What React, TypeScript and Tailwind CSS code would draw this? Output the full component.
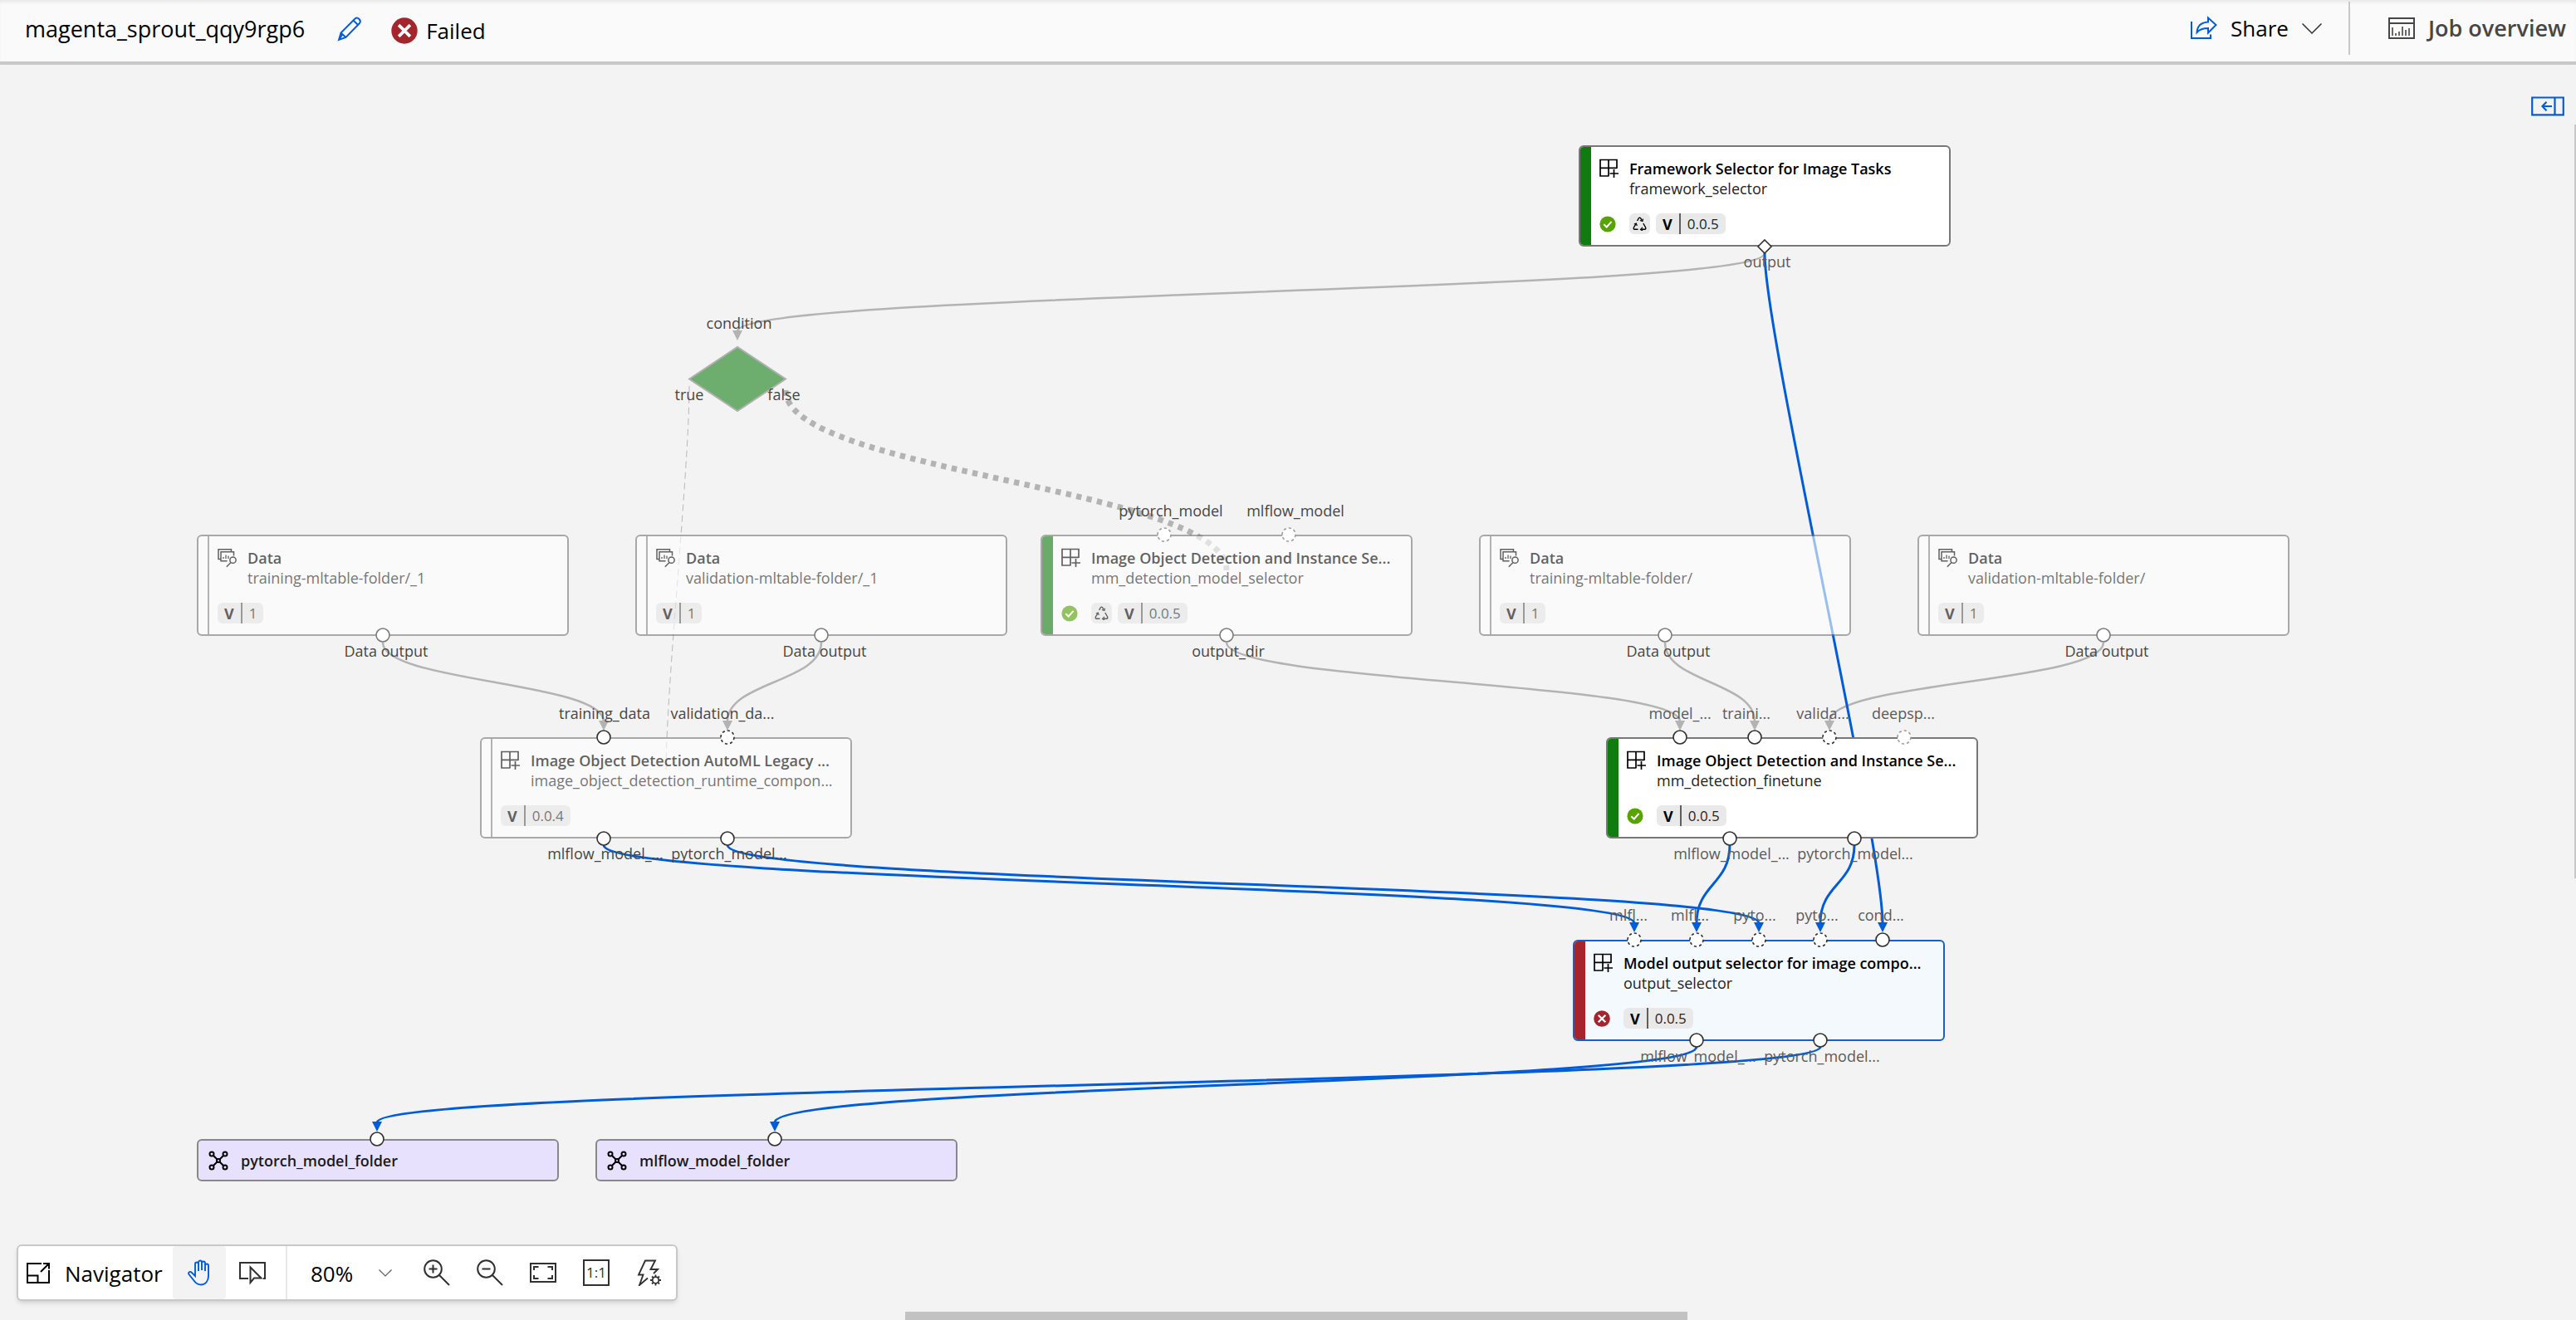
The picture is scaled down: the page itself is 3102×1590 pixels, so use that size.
import type { ReactNode } from "react";

type Status = "ok" | "failed" | "none";
type Kind = "component" | "data";

interface CardData {
  x: number;
  y: number;
  kind: Kind;
  title: string;
  name: string;
  version: string;
  status: Status;
  reused?: boolean;
  dim?: boolean;
  selected?: boolean;
}

const ROW_1 = 97;
const ROW_2 = 566;
const ROW_3 = 810;
const ROW_4 = 1054;
const ROW_5 = 1294;

const cards: CardData[] = [
  { x: 1901, y: ROW_1, kind: "component", title: "Framework Selector for Image Tasks", name: "framework_selector", version: "0.0.5", status: "ok", reused: true },
  { x: 237, y: ROW_2, kind: "data", title: "Data", name: "training-mltable-folder/_1", version: "1", status: "none", dim: true },
  { x: 765, y: ROW_2, kind: "data", title: "Data", name: "validation-mltable-folder/_1", version: "1", status: "none", dim: true },
  { x: 1253, y: ROW_2, kind: "component", title: "Image Object Detection and Instance Se...", name: "mm_detection_model_selector", version: "0.0.5", status: "ok", reused: true, dim: true },
  { x: 1781, y: ROW_2, kind: "data", title: "Data", name: "training-mltable-folder/", version: "1", status: "none", dim: true },
  { x: 2309, y: ROW_2, kind: "data", title: "Data", name: "validation-mltable-folder/", version: "1", status: "none", dim: true },
  { x: 578, y: ROW_3, kind: "component", title: "Image Object Detection AutoML Legacy ...", name: "image_object_detection_runtime_compon...", version: "0.0.4", status: "none", dim: true },
  { x: 1934, y: ROW_3, kind: "component", title: "Image Object Detection and Instance Se...", name: "mm_detection_finetune", version: "0.0.5", status: "ok" },
  { x: 1894, y: ROW_4, kind: "component", title: "Model output selector for image compo...", name: "output_selector", version: "0.0.5", status: "failed", selected: true },
];

const outputs = [
  { x: 237, label: "pytorch_model_folder" },
  { x: 717, label: "mlflow_model_folder" },
];

interface Edge {
  from: [number, number];
  to: [number, number];
  active?: boolean;
}

const edges: Edge[] = [
  { from: [2125, 227], to: [888, 332] },
  { from: [461, 696], to: [727, 802] },
  { from: [989, 696], to: [876, 802] },
  { from: [1477, 696], to: [2023, 802] },
  { from: [2005, 696], to: [2113, 802] },
  { from: [2533, 696], to: [2203, 802] },
  { from: [2125, 227], to: [2267, 1045], active: true },
  { from: [727, 940], to: [1968, 1045], active: true },
  { from: [876, 940], to: [2118, 1045], active: true },
  { from: [2083, 940], to: [2043, 1045], active: true },
  { from: [2233, 940], to: [2192, 1045], active: true },
  { from: [2043, 1183], to: [933, 1285], active: true },
  { from: [2192, 1183], to: [454, 1285], active: true },
];

interface Port {
  x: number;
  y: number;
  optional?: boolean;
  faded?: boolean;
}

const ports: Port[] = [
  { x: 461, y: 687, faded: true },
  { x: 989, y: 687, faded: true },
  { x: 1477, y: 687, faded: true },
  { x: 2005, y: 687, faded: true },
  { x: 2533, y: 687, faded: true },
  { x: 1402, y: 566, optional: true, faded: true },
  { x: 1552, y: 566, optional: true, faded: true },
  { x: 727, y: 810 },
  { x: 876, y: 810, optional: true },
  { x: 727, y: 932 },
  { x: 876, y: 932 },
  { x: 2023, y: 810 },
  { x: 2113, y: 810 },
  { x: 2203, y: 810, optional: true },
  { x: 2293, y: 810, optional: true, faded: true },
  { x: 2083, y: 932 },
  { x: 2233, y: 932 },
  { x: 1968, y: 1054, optional: true },
  { x: 2043, y: 1054, optional: true },
  { x: 2118, y: 1054, optional: true },
  { x: 2192, y: 1054, optional: true },
  { x: 2267, y: 1054 },
  { x: 2043, y: 1175 },
  { x: 2192, y: 1175 },
  { x: 454, y: 1294 },
  { x: 933, y: 1294 },
];

/* x is the middle of the text, y the top of its 24px line */
const labels: { x: number; y: number; text: string; light?: boolean }[] = [
  { x: 2128, y: 225, text: "output", light: true },
  { x: 890, y: 299, text: "condition" },
  { x: 830, y: 385, text: "true" },
  { x: 944, y: 385, text: "false" },
  { x: 1410, y: 525, text: "pytorch_model" },
  { x: 1560, y: 525, text: "mlflow_model" },
  { x: 465, y: 694, text: "Data output" },
  { x: 993, y: 694, text: "Data output" },
  { x: 1479, y: 694, text: "output_dir" },
  { x: 2009, y: 694, text: "Data output" },
  { x: 2537, y: 694, text: "Data output" },
  { x: 728, y: 769, text: "training_data" },
  { x: 870, y: 769, text: "validation_da..." },
  { x: 2023, y: 769, text: "model_...", light: true },
  { x: 2103, y: 769, text: "traini...", light: true },
  { x: 2195, y: 769, text: "valida...", light: true },
  { x: 2292, y: 769, text: "deepsp...", light: true },
  { x: 729, y: 938, text: "mlflow_model_..." },
  { x: 878, y: 938, text: "pytorch_model..." },
  { x: 2085, y: 938, text: "mlflow_model_...", light: true },
  { x: 2234, y: 938, text: "pytorch_model...", light: true },
  { x: 1961, y: 1012, text: "mlfl...", light: true },
  { x: 2035, y: 1012, text: "mlfl...", light: true },
  { x: 2113, y: 1012, text: "pyto...", light: true },
  { x: 2188, y: 1012, text: "pyto...", light: true },
  { x: 2265, y: 1012, text: "cond...", light: true },
  { x: 2045, y: 1182, text: "mlflow_model_...", light: true },
  { x: 2194, y: 1182, text: "pytorch_model...", light: true },
];

function curve([x1, y1]: [number, number], [x2, y2]: [number, number]) {
  const bend = Math.min((y2 - y1) / 2, 100);
  return `M${x1} ${y1}C${x1} ${y1 + bend} ${x2} ${y2 - bend} ${x2} ${y2}`;
}

function Icon({ className, box, children }: { className: string; box: string; children: ReactNode }) {
  return (
    <svg className={className} viewBox={box} fill="none" stroke="currentColor" strokeWidth="2" aria-hidden="true">
      {children}
    </svg>
  );
}

const ComponentIcon = () => (
  <Icon className="h-6 w-6 shrink-0" box="0 0 24 24">
    <path d="M11.5 21H1V1.500H21V12M1 11.300H21M11 1.500V21M17.500 13V23M12.500 18H23" strokeWidth="1.7" />
  </Icon>
);

const DataIcon = () => (
  <Icon className="h-6 w-6 shrink-0" box="0 0 24 24">
    <path d="M3.500 13.500H1V1.700H16.500V4M11.500 15.700H4V4.800H19.500V9.500" strokeWidth="1.500" />
    <path d="M7 13V11M10 13V8.500M13 13V9.500" strokeWidth="1.300" />
    <circle cx="18.500" cy="14.700" r="3.600" strokeWidth="1.500" />
    <path d="M16 17.500L10.800 22.800" strokeWidth="1.500" />
  </Icon>
);

const OkIcon = () => (
  <svg className="h-5 w-5" viewBox="0 0 20 20" role="img" aria-label="Completed">
    <circle cx="10" cy="10" r="9.600" fill="#57a300" />
    <path d="M5.300 10.300L8.700 13.500L14.600 6.800" fill="none" stroke="#fff" strokeWidth="2" />
  </svg>
);

const FailIcon = ({ className }: { className: string }) => (
  <svg className={className} viewBox="0 0 20 20" aria-hidden="true">
    <circle cx="10" cy="10" r="9.800" fill="#a4262c" />
    <path d="M5.700 5.700L14.300 14.300M14.300 5.700L5.700 14.300" fill="none" stroke="#fff" strokeWidth="2.300" />
  </svg>
);

const RecycleIcon = () => (
  <Icon className="h-[17px] w-[17px]" box="0 0 17 17">
    <path d="M5.500 5L7.300 1.900Q8.500 .4 9.700 1.900L11.300 4.700M12.800 8L15.600 13Q16.300 15 14.500 15.300H10.500M6.500 15.300H2.500Q.7 15 1.400 13L3.800 8.800" strokeWidth="1.400" />
    <path d="M8.800 4.500L11.900 5.500L12.500 2.600M12 12.900L9.500 15.300L12 17M1.800 9L4.300 8L5.300 11" strokeWidth="1.200" />
  </Icon>
);

function NodeCard({ card }: { card: CardData }) {
  const border = card.selected ? "border-[#1560c8]" : "border-[#797775]";
  const surface = card.selected ? "bg-[#f3f9fd]" : "bg-white";
  const dim = card.dim ? "opacity-60" : "";
  const bar =
    card.status === "ok" ? "bg-[#107c10]" : card.status === "failed" ? "bg-[#a4262c]" : "border-r-2 border-[#8a8886]";
  return (
    <article
      className={`absolute flex h-[122px] w-[448px] overflow-hidden rounded-md border-2 ${border} ${surface} ${dim}`}
      style={{ left: card.x, top: card.y }}
    >
      <div className={`w-[13px] shrink-0 ${bar}`} />
      <div className="flex min-w-0 flex-1 flex-col pt-3.5 pl-2.5">
        <div className="flex gap-3">
          {card.kind === "component" ? <ComponentIcon /> : <DataIcon />}
          <div className="whitespace-nowrap leading-6">
            <h2 className="text-[18px] leading-6 font-semibold text-black">{card.title}</h2>
            <p className="text-[18px] leading-6 text-[#252423]">{card.name}</p>
          </div>
        </div>
        <div className="mt-[18px] flex h-[25px] items-center">
          {card.status !== "none" && (
            <span className="w-9">{card.status === "ok" ? <OkIcon /> : <FailIcon className="h-5 w-5" />}</span>
          )}
          {card.reused && (
            <span className="mr-[7px] flex h-full w-[25px] items-center justify-center rounded-md bg-[#e9e9e9]">
              <RecycleIcon />
            </span>
          )}
          <span className="flex h-full items-center rounded-md bg-[#e9e9e9] leading-6">
            <b className="px-2 text-[18px] font-bold">V</b>
            <span className="h-full w-0.5 bg-[#605e5c]" />
            <span className="px-2 text-[17px] text-[#252423]">{card.version}</span>
          </span>
        </div>
      </div>
    </article>
  );
}

function ToolButton({ label, active, children }: { label: string; active?: boolean; children: ReactNode }) {
  return (
    <button
      aria-label={label}
      className={`flex w-16 items-center justify-center ${active ? "rounded-sm bg-[#f3f3f3] text-[#015cda]" : "text-[#323130]"}`}
    >
      {children}
    </button>
  );
}

function Toolbar() {
  return (
    <div className="absolute bottom-[23px] left-5 flex h-[68px] items-stretch rounded-md border-2 border-[#c8c8c8] bg-white text-[26px] text-black shadow-md">
      <button className="flex w-[186px] items-center gap-[18px] pt-0.5 pl-2.5">
        <Icon className="mb-0.5 h-7 w-7 shrink-0" box="0 0 28 28">
          <path d="M18 3H1V26H27V11M1 17.500H13.500V26M20 3H27V9.500M26.500 3.500L17 13" />
        </Icon>
        Navigator
      </button>
      <ToolButton label="Pan" active>
        <Icon className="h-8 w-8" box="0 0 32 32">
          <path
            d="M11 14V5.500a2 2 0 0 1 4 0V14M15 13V3.500a2 2 0 0 1 4 0V13M19 13V4.500a2 2 0 0 1 4 0V14M23 14V7.500a2 2 0 0 1 4 0V20c0 6-3.500 10.500-9 10.500-4 0-6.500-2-8.500-5L3.500 18c-1.300-2.200 1.200-4 3-2.500L11 20V14"
            strokeWidth="1.900"
          />
        </Icon>
      </ToolButton>
      <ToolButton label="Select">
        <Icon className="h-8 w-8" box="0 0 32 32">
          <path d="M11 23H1V4H31V23H29" />
          <path d="M13.500 9.500V28L18 22.500H26.500Z" />
        </Icon>
      </ToolButton>
      <div className="ml-2 w-0.5 bg-[#e8e8e8]" />
      <label className="flex w-[148px] items-center pl-7">
        <select aria-label="Zoom level" className="w-[82px] appearance-none bg-transparent pt-0.5" defaultValue="80%">
          <option>80%</option>
          <option>100%</option>
        </select>
        <Icon className="h-4 w-4 text-[#605e5c]" box="0 0 16 16">
          <path d="M.5 4.500L8 12L15.500 4.500" strokeWidth="1.200" />
        </Icon>
      </label>
      <ToolButton label="Zoom in">
        <Icon className="h-8 w-8" box="0 0 32 32">
          <circle cx="11.500" cy="11.500" r="10.300" />
          <path d="M19 19L31 31M11.500 6.500V16.500M6.500 11.500H16.500" />
        </Icon>
      </ToolButton>
      <ToolButton label="Zoom out">
        <Icon className="h-8 w-8" box="0 0 32 32">
          <circle cx="11.500" cy="11.500" r="10.300" />
          <path d="M19 19L31 31M6.500 11.500H16.500" />
        </Icon>
      </ToolButton>
      <ToolButton label="Fit to screen">
        <Icon className="h-8 w-8" box="0 0 32 32">
          <path d="M1 5H31V27H1ZM5 13V9H10.500M21.500 9H27V13M27 19V23H21.500M10.500 23H5V19" />
        </Icon>
      </ToolButton>
      <ToolButton label="Actual size">
        <span className="flex h-8 w-8 items-center justify-center border-2 border-[#323130] text-[17px] leading-7">1:1</span>
      </ToolButton>
      <ToolButton label="Auto layout">
        <Icon className="h-8 w-8" box="0 0 32 32">
          <path d="M14 22.500L4 31L8.500 18.500H3L11 1.500H23L17.500 12H26L21 17" strokeWidth="1.900" />
          <circle cx="23.500" cy="25" r="3.800" strokeWidth="1.800" />
          <path d="M23.500 18.500V21M23.500 29V31.500M17 25H19.500M27.500 25H30M19 20.500L20.700 22.200M26.300 27.800L28 29.500M28 20.500L26.300 22.200M20.700 27.800L19 29.500" strokeWidth="1.800" />
        </Icon>
      </ToolButton>
    </div>
  );
}

export default function App() {
  return (
    <div className="flex h-screen flex-col overflow-hidden bg-[#f3f3f3] font-['Open_Sans','Noto_Sans',sans-serif] text-black">
      <header className="flex h-[78px] shrink-0 items-start border-b-4 border-[#c8c8c8] bg-[#fafafa] pl-[30px] text-[26px] leading-9 shadow-[inset_0_4px_4px_-2px_#e4e4e4]">
        <div className="flex h-[70px] items-center">
          <h1 className="text-[27px] font-medium">magenta_sprout_qqy9rgp6</h1>
          <button aria-label="Rename job" className="ml-[38px] text-[#015cda]">
            <Icon className="h-8 w-8" box="0 0 32 32">
              <path d="M3 29L5.500 20.500L22.500 3.500Q25 1.500 27.500 4Q30 6.500 28 9L11.500 26L3 29ZM20.500 5.500L26.500 11.500M5.500 20.500L11.500 26M3 29L7 23" strokeWidth="1.900" />
            </Icon>
          </button>
          <div className="mt-1 ml-[34px] flex items-center gap-2.5">
            <FailIcon className="h-8 w-8" />
            <span>Failed</span>
          </div>
        </div>
        <div className="ml-auto flex h-[66px] items-center pt-0.5">
          <button className="flex items-center gap-4">
            <Icon className="h-8 w-8 text-[#015cda]" box="0 0 32 32">
              <path d="M1 8V28H24V23.500" />
              <path d="M21 3.500L30.500 12L21 21.500V16C15 16 11 17 7.500 21C8 12.500 13 9 21 8.500Z" />
            </Icon>
            Share
            <Icon className="h-6 w-6 text-[#323130]" box="0 0 24 24">
              <path d="M.5 6.500L12 18L23.500 6.500" strokeWidth="1.500" />
            </Icon>
          </button>
          <div className="mr-[46px] ml-8 h-16 w-0.5 self-end bg-[#c8c8c8]" />
          <button className="flex items-center gap-4 pr-3 text-[27px] font-semibold text-[#484644]">
            <Icon className="h-8 w-8" box="0 0 32 32">
              <path d="M1 4H31V28H1ZM1 10H31" />
              <path d="M5 15V25M9 22V25M13 20V25M17 14V25M21 18V25M25 16V25" strokeWidth="1.600" />
            </Icon>
            Job overview
          </button>
        </div>
      </header>

      <main className="relative min-h-0 flex-1 overflow-hidden">
        <svg className="absolute inset-0 h-full w-full" fill="none" aria-hidden="true">
          <path d={curve([830, 387], [802, 852])} stroke="#b8b8b8" strokeWidth="1" strokeDasharray="8 5" />
          <path d={curve([946, 392], [1477, 609])} stroke="#b3b3b3" strokeWidth="7" strokeDasharray="6.400 6.400" />
          <path d="M830 378.500L888 340L946 378.500L888 417Z" fill="#6dae6e" stroke="#b0b0b0" strokeWidth="2" />
          {edges.map((e, i) => {
            const color = e.active ? "#015cda" : "#b3b3b3";
            const [x, y] = e.to;
            return (
              <g key={i}>
                <path d={curve(e.from, [x, y - 11])} stroke={color} strokeWidth={e.active ? 3 : 2.5} />
                <path d={`M${x - 6} ${y - 12}H${x + 6}L${x} ${y}Z`} fill={color} />
              </g>
            );
          })}
        </svg>

        {cards.map((card) => (
          <NodeCard key={`${card.x}-${card.y}`} card={card} />
        ))}

        {outputs.map((o) => (
          <article
            key={o.label}
            className="absolute flex h-[51px] w-[436px] items-center gap-[15px] rounded-md border-2 border-[#8a8886] bg-[#e8e1fd] pt-px pl-3"
            style={{ left: o.x, top: ROW_5 }}
          >
            <Icon className="h-6 w-6" box="0 0 24 24">
              <circle cx="4" cy="4" r="2.500" />
              <circle cx="20" cy="4" r="2.500" />
              <circle cx="4" cy="20" r="2.500" />
              <circle cx="20" cy="20" r="2.500" />
              <circle cx="12" cy="12" r="2" />
              <path d="M6 6L10.500 10.500M18 6L13.500 10.500M6 18L10.500 13.500M18 18L13.500 13.500" />
            </Icon>
            <h2 className="text-[18px] leading-6 font-semibold text-[#1b1a19]">{o.label}</h2>
          </article>
        ))}

        <svg className="absolute inset-0 h-full w-full" fill="#fff" aria-hidden="true">
          {ports.map((p, i) => (
            <circle
              key={i}
              cx={p.x}
              cy={p.y}
              r="8"
              stroke={p.faded ? (p.optional ? "#9d9d9d" : "#7a7a7a") : "#323130"}
              strokeWidth="1.600"
              strokeDasharray={p.optional ? "3.200 3" : undefined}
            />
          ))}
          <path d="M2125 211L2133 219L2125 227L2117 219Z" stroke="#323130" strokeWidth="1.600" />
        </svg>

        {labels.map((l, i) => (
          <span
            key={i}
            className={`absolute -translate-x-1/2 text-[18px] leading-6 whitespace-nowrap ${l.light ? "text-[#5c5b5a]" : "text-[#484644]"}`}
            style={{ left: l.x, top: l.y }}
          >
            {l.text}
          </span>
        ))}

        <button aria-label="Open side panel" className="absolute top-[38px] right-3.5 text-[#015cda]">
          <Icon className="h-6 w-10" box="0 0 40 24">
            <path d="M1.200 1.500H38.800V22.300H1.200ZM28.500 1.500V22.300" strokeWidth="2.200" />
            <path d="M25 12H13.500M18.500 6.800L13.500 12L18.500 17.200" strokeWidth="2.200" />
          </Icon>
        </button>

        <Toolbar />

        <div className="absolute right-0 top-[72px] h-[908px] w-0.5 bg-[#c8c8c8]" />
        <div className="absolute bottom-0 left-[1090px] h-2.5 w-[942px] bg-[#c2c2c2]" />
      </main>
    </div>
  );
}
